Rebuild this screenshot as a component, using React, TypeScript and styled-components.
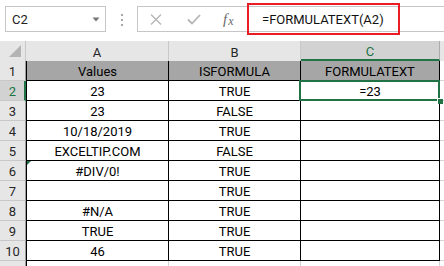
import React from "react";
import styled, { createGlobalStyle, css } from "styled-components";

const Global = createGlobalStyle`
  html, body { margin: 0; padding: 0; background: #ffffff; overflow: hidden; }
  body { font-family: Roboto, "Liberation Sans", sans-serif; }
`;

const GREEN = "#217346";

const Page = styled.div`
  width: 444px;
  height: 266px;
  overflow: hidden;
  background: #ffffff;
`;

const Toolbar = styled.div`
  position: relative;
  height: 41px;
  box-sizing: border-box;
  padding: 6px 0 0 5px;
  display: flex;
  align-items: flex-start;
  background: #ffffff;
`;

const NameBox = styled.div`
  width: 101px;
  height: 26px;
  box-sizing: border-box;
  border: 1px solid #c6c6c6;
  display: flex;
  align-items: center;
  justify-content: space-between;
  padding: 0 5px 0 6px;
  font-size: 13px;
  color: #222;
`;

const Grip = styled.div`
  width: 31px;
  height: 26px;
  display: flex;
  flex-direction: column;
  align-items: center;
  justify-content: center;
  gap: 3px;
  padding-top: 1px;
  box-sizing: border-box;
`;

const Dot = styled.span`
  width: 2px;
  height: 2px;
  background: #a8a8a8;
`;

const FormulaBox = styled.div`
  flex: 1;
  height: 26px;
  box-sizing: border-box;
  border: 1px solid #c6c6c6;
  border-right: none;
  display: flex;
`;

const Buttons = styled.div`
  width: 109px;
  display: flex;
  align-items: center;
  padding-left: 12px;
  box-sizing: border-box;
`;

const Fx = styled.span`
  margin-left: 22px;
  font-family: "Liberation Serif", "DejaVu Serif", serif;
  font-style: italic;
  color: #6a6a6a;
  font-size: 15px;
  line-height: 1;
  display: flex;
  align-items: flex-end;
`;

const FxSub = styled.span`
  font-size: 12px;
  margin-left: 1px;
`;

const FormulaInput = styled.div`
  flex: 1;
  border-left: 1px solid #c6c6c6;
  display: flex;
  align-items: center;
  padding-left: 14px;
  font-size: 13px;
  color: #111;
`;

const Highlight = styled.div`
  position: absolute;
  left: 247px;
  top: 3px;
  width: 153px;
  height: 32px;
  box-sizing: border-box;
  border: 2px solid #ec1c24;
  pointer-events: none;
`;

const Sheet = styled.div`
  display: grid;
  grid-template-columns: 26px 143px 132px 139px 1fr;
  grid-auto-rows: 20px;
  font-size: 13px;
`;

const Corner = styled.div`
  background: #e6e6e6;
  border-right: 1px solid #c8c8c8;
  box-sizing: border-box;
  display: flex;
  align-items: flex-end;
  justify-content: flex-end;
  padding: 0 4px 4px 0;
`;

const ColHead = styled.div<{ $active?: boolean }>`
  background: #e6e6e6;
  border-right: 1px solid #c8c8c8;
  box-sizing: border-box;
  display: flex;
  align-items: center;
  justify-content: center;
  padding-top: 2px;
  color: #262626;
  ${(p) =>
    p.$active &&
    css`
      background: #d2d2d2;
      color: ${GREEN};
      border-bottom: 2px solid ${GREEN};
      border-right-color: #ababab;
      padding-top: 3px;
    `}
`;

const RowHead = styled.div<{ $active?: boolean }>`
  background: #e6e6e6;
  border-right: 1px solid #9b9b9b;
  border-bottom: 1px solid #c8c8c8;
  box-sizing: border-box;
  display: flex;
  align-items: center;
  justify-content: center;
  padding-top: 2px;
  color: #262626;
  ${(p) =>
    p.$active &&
    css`
      background: #d2d2d2;
      color: ${GREEN};
      border-right: 2px solid ${GREEN};
      padding-left: 1px;
    `}
`;

const Cell = styled.div<{ $title?: boolean; $first?: boolean; $selected?: boolean; $flag?: boolean }>`
  position: relative;
  box-sizing: border-box;
  border-right: 1px solid #000;
  border-bottom: 1px solid #000;
  ${(p) => p.$first && css`border-left: 1px solid #000;`}
  background: ${(p) => (p.$title ? "#a6a6a6" : "#ffffff")};
  display: flex;
  align-items: center;
  justify-content: center;
  padding-top: 2px;
  color: #000;
  white-space: nowrap;
  ${(p) =>
    p.$selected &&
    css`
      &::after {
        content: "";
        position: absolute;
        top: -1px;
        left: -2px;
        right: -1px;
        bottom: -1px;
        border: 2px solid ${GREEN};
      }
      &::before {
        content: "";
        position: absolute;
        right: -4px;
        bottom: -4px;
        width: 5px;
        height: 5px;
        background: ${GREEN};
        border: 1px solid #fff;
        border-right: none;
        border-bottom: none;
        z-index: 2;
      }
    `}
  ${(p) =>
    p.$flag &&
    css`
      &::before {
        content: "";
        position: absolute;
        left: 0;
        top: 0;
        border-top: 4px solid ${GREEN};
        border-right: 4px solid transparent;
      }
    `}
`;

const Filler = styled.div<{ $head?: boolean }>`
  box-sizing: border-box;
  background: ${(p) => (p.$head ? "#e6e6e6" : "#ffffff")};
  border-bottom: 1px solid ${(p) => (p.$head ? "transparent" : "#d4d4d4")};
`;

const EmptyCell = styled.div<{ $first?: boolean }>`
  box-sizing: border-box;
  border-right: 1px solid #d4d4d4;
  border-bottom: 1px solid #d4d4d4;
  ${(p) => p.$first && css`border-left: 1px solid #000;`}
`;

const rows: [string, string, string][] = [
  ["Values", "ISFORMULA", "FORMULATEXT"],
  ["23", "TRUE", "=23"],
  ["23", "FALSE", ""],
  ["10/18/2019", "TRUE", ""],
  ["EXCELTIP.COM", "FALSE", ""],
  ["#DIV/0!", "TRUE", ""],
  ["", "TRUE", ""],
  ["#N/A", "TRUE", ""],
  ["TRUE", "TRUE", ""],
  ["46", "TRUE", ""],
];

export default function App() {
  return (
    <Page>
      <Global />
      <Toolbar>
        <NameBox>
          <span>C2</span>
          <svg width="8" height="5" viewBox="0 0 8 5">
            <path d="M0.5 0.5 L7.5 0.5 L4 4.5 Z" fill="#777" />
          </svg>
        </NameBox>
        <Grip>
          <Dot />
          <Dot />
          <Dot />
        </Grip>
        <FormulaBox>
          <Buttons>
            <svg width="12" height="11" viewBox="0 0 12 11">
              <path d="M1 0.5 L11 10.5 M11 0.5 L1 10.5" stroke="#b5b5b5" strokeWidth="1.3" fill="none" />
            </svg>
            <svg width="14" height="11" viewBox="0 0 14 11" style={{ marginLeft: 25 }}>
              <path d="M1 5.5 L5 9.5 L13 1" stroke="#b5b5b5" strokeWidth="1.8" fill="none" />
            </svg>
            <Fx>
              f<FxSub>x</FxSub>
            </Fx>
          </Buttons>
          <FormulaInput>=FORMULATEXT(A2)</FormulaInput>
        </FormulaBox>
        <Highlight />
      </Toolbar>
      <Sheet>
        <Corner>
          <svg width="12" height="12" viewBox="0 0 12 12">
            <path d="M12 0 L12 12 L0 12 Z" fill="#b4b4b4" />
          </svg>
        </Corner>
        <ColHead>A</ColHead>
        <ColHead>B</ColHead>
        <ColHead $active>C</ColHead>
        <Filler $head />
        {rows.map((r, i) => (
          <React.Fragment key={i}>
            <RowHead $active={i === 1}>{i + 1}</RowHead>
            <Cell $first $title={i === 0} $flag={i === 5}>
              {r[0]}
            </Cell>
            <Cell $title={i === 0}>{r[1]}</Cell>
            <Cell $title={i === 0} $selected={i === 1}>
              {r[2]}
            </Cell>
            <Filler />
          </React.Fragment>
        ))}
        <RowHead />
        <EmptyCell $first />
        <EmptyCell />
        <EmptyCell />
        <Filler />
      </Sheet>
    </Page>
  );
}
